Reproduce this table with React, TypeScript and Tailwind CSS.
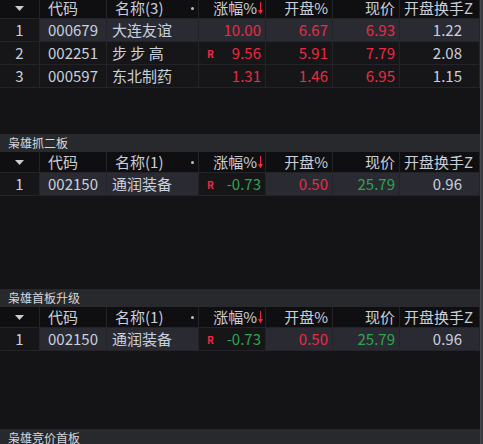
const RED = "text-[#ec2a44]";
const GREEN = "text-[#2da550]";

type Row = {
  idx: number;
  code: string;
  name: string;
  chg: string;
  chgUp: boolean;
  badge?: boolean;
  open: string;
  openUp: boolean;
  price: string;
  priceUp: boolean;
  turn: string;
  hl?: boolean;
  hlChg?: boolean;
};

const cols = "grid grid-cols-[40px_67px_92px_67px_67px_67px_80px]";
const cell = "border-r border-b border-[#232328] flex items-center whitespace-nowrap";

const Header = ({ count, cls = "" }: { count: number; cls?: string }) => (
  <div className={`${cols} h-[21px] shrink-0 bg-[#0f0f11] text-[#c9ced8] text-[15px] leading-[20px] ${cls}`}>
    <div className={`${cell} justify-center`}>
      <svg width="9" height="5" viewBox="0 0 9 5">
        <path d="M0 0h9L4.5 5z" fill="#c9ccd2" />
      </svg>
    </div>
    <div className={`${cell} pl-[8px]`}>代码</div>
    <div className={`${cell} pl-[8px] relative`}>
      名称({count})
      <span className="absolute right-[4px] top-[9px] w-[3px] h-[3px] rounded-full bg-[#b8bcc4]" />
    </div>
    <div className={`${cell} justify-end pr-[8px] relative`}>
      涨幅%
      <svg className="absolute right-[2px] top-[4px]" width="5" height="13" viewBox="0 0 5 13">
        <path d="M2.5 0v11" stroke="#ec2a44" strokeWidth="1" />
        <path d="M0 8l2.5 4.5 2.5-4.5z" fill="#ec2a44" />
      </svg>
    </div>
    <div className={`${cell} justify-end pr-[4px]`}>开盘%</div>
    <div className={`${cell} justify-end pr-[4px]`}>现价</div>
    <div className={`${cell} pl-[4px]`}>开盘换手Z</div>
  </div>
);

const DataRow = ({ r }: { r: Row }) => {
  const hl = r.hl ? "bg-[#2a2a33]" : "bg-[#161618]";
  const hlChg = r.hl && r.hlChg ? "bg-[#2a2a33]" : "bg-[#161618]";
  return (
    <div className={`${cols} h-[23px] shrink-0 text-[15px] leading-[20px] text-[#c9d1de]`}>
      <div className={`${cell} justify-center bg-[#161618]`}>{r.idx}</div>
      <div className={`${cell} ${hl} pl-[8px]`}>{r.code}</div>
      <div className={`${cell} ${hl} pl-[5px]`}>{r.name}</div>
      <div className={`${cell} ${hlChg} justify-end pr-[4px] relative`}>
        {r.badge && (
          <span className="absolute left-[8px] top-[6px] text-[10px] leading-[12px] font-bold text-[#ec2a44]">R</span>
        )}
        <span className={r.chgUp ? RED : GREEN}>{r.chg}</span>
      </div>
      <div className={`${cell} ${hl} justify-end pr-[4px]`}>
        <span className={r.openUp ? RED : GREEN}>{r.open}</span>
      </div>
      <div className={`${cell} ${hl} justify-end pr-[4px]`}>
        <span className={r.priceUp ? RED : GREEN}>{r.price}</span>
      </div>
      <div className={`${cell} ${hl} justify-end pr-[17px]`}>{r.turn}</div>
    </div>
  );
};

const Title = ({ text }: { text: string }) => (
  <div className="h-[18px] shrink-0 bg-[#28292d] text-[#d6d8dc] text-[12px] leading-none flex items-center pl-[8px]">
    {text}
  </div>
);

const Section = ({ title, rows, h, scrolled }: { title?: string; rows: Row[]; h: string; scrolled?: boolean }) => (
  <div className={`flex flex-col overflow-hidden shrink-0 ${h}`}>
    {title && <Title text={title} />}
    <Header count={rows.length} cls={scrolled ? "-mt-[2px]" : ""} />
    {rows.map((r) => (
      <DataRow key={r.idx} r={r} />
    ))}
    <div className="flex-1" />
  </div>
);

const first: Row[] = [
  { idx: 1, code: "000679", name: "大连友谊", chg: "10.00", chgUp: true, open: "6.67", openUp: true, price: "6.93", priceUp: true, turn: "1.22", hl: true, hlChg: true },
  { idx: 2, code: "002251", name: "步 步 高", chg: "9.56", chgUp: true, badge: true, open: "5.91", openUp: true, price: "7.79", priceUp: true, turn: "2.08" },
  { idx: 3, code: "000597", name: "东北制药", chg: "1.31", chgUp: true, open: "1.46", openUp: true, price: "6.95", priceUp: true, turn: "1.15" },
];

const single: Row[] = [
  { idx: 1, code: "002150", name: "通润装备", chg: "-0.73", chgUp: false, badge: true, open: "0.50", openUp: true, price: "25.79", priceUp: false, turn: "0.96", hl: true },
];

export default function App() {
  return (
    <div
      className="w-[483px] h-[444px] overflow-hidden bg-[#141315] flex"
      style={{ fontFamily: '"Noto Sans CJK SC", "Noto Sans", sans-serif' }}
    >
      <div className="w-[480px] flex flex-col">
        <Section rows={first} h="h-[134px]" scrolled />
        <Section title="枭雄抓二板" rows={single} h="h-[155px]" />
        <Section title="枭雄首板升级" rows={single} h="h-[140px]" />
        <Title text="枭雄竞价首板" />
      </div>
      <div className="w-[3px] bg-[#3a3b40] border-l border-[#4a4b52]" />
    </div>
  );
}
